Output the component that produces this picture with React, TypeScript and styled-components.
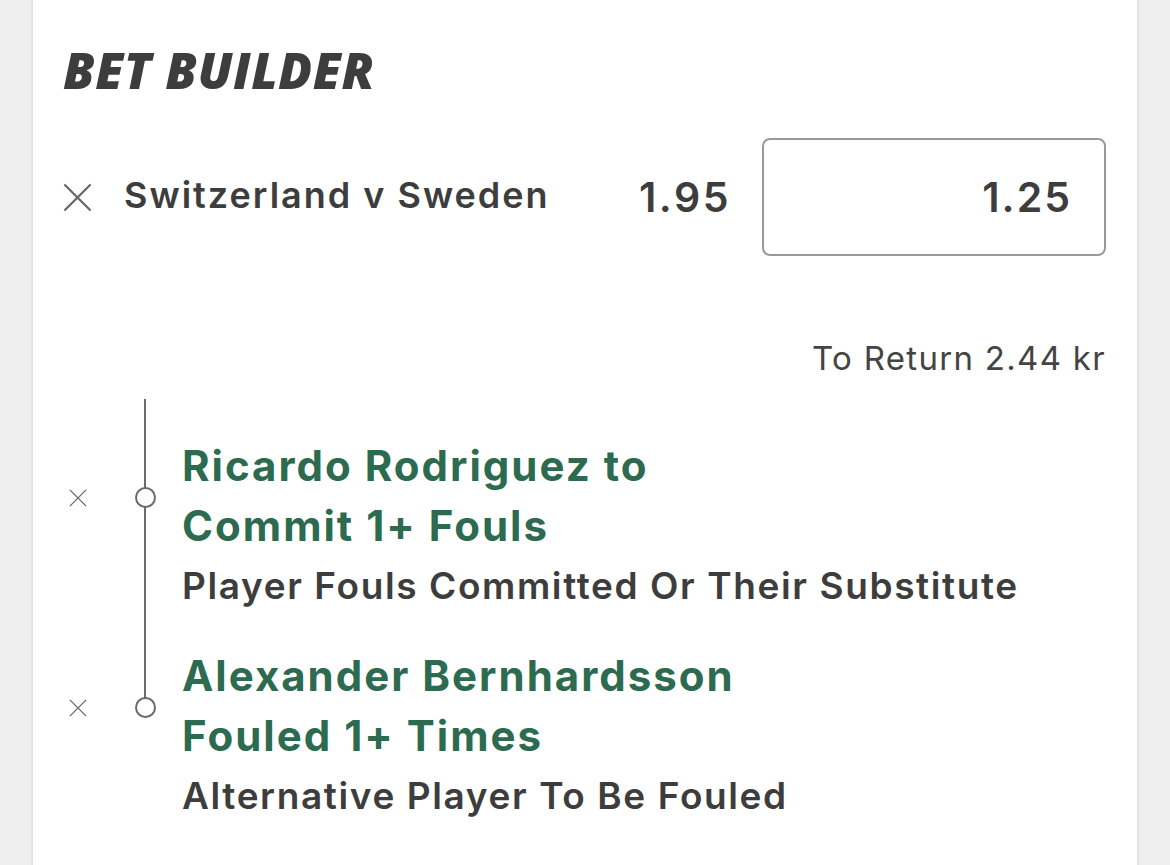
import React from 'react'
import styled, { createGlobalStyle } from 'styled-components';

interface Leg {
    id: number;
    title: string[];
    market: string;
}

const legs: Leg[] = [
    { id: 1, title: ['Ricardo Rodriguez to', 'Commit 1+ Fouls'], market: 'Player Fouls Committed Or Their Substitute' },
    { id: 2, title: ['Alexander Bernhardsson', 'Fouled 1+ Times'], market: 'Alternative Player To Be Fouled' },
];

const CloseIcon: React.FC<{ size: number; stroke: number }> = ({ size, stroke }) => (
    <svg width={size} height={size} viewBox="0 0 20 20">
        <path d="M1 1 L19 19 M19 1 L1 19" stroke="#666" strokeWidth={stroke} fill="none" />
    </svg>
);

export default function App() {
    return (
        <>
            <GlobalStyle />
            <Page>
                <Card>
                    <Title>BET BUILDER</Title>
                    <SelectionRow>
                        <RemoveButton type="button">
                            <CloseIcon size={29} stroke={1.5} />
                        </RemoveButton>
                        <MatchName>Switzerland v Sweden</MatchName>
                        <Odds>1.95</Odds>
                        <StakeBox>1.25</StakeBox>
                    </SelectionRow>
                    <ReturnText>To Return 2.44 kr</ReturnText>
                    <LegList>
                        <Rail />
                        {legs.map((leg) => (
                            <LegRow key={leg.id}>
                                <LegControls>
                                    <LegRemove type="button">
                                        <CloseIcon size={18} stroke={1.4} />
                                    </LegRemove>
                                    <Dot />
                                </LegControls>
                                <LegTitle>
                                    {leg.title.map((line) => (
                                        <div key={line}>{line}</div>
                                    ))}
                                </LegTitle>
                                <LegMarket>{leg.market}</LegMarket>
                            </LegRow>
                        ))}
                    </LegList>
                </Card>
            </Page>
        </>
    );
}

const GlobalStyle = createGlobalStyle`
    html, body {
        margin: 0;
        padding: 0;
        background: #efefef;
    }
    body {
        font-family: Inter, "Noto Sans", sans-serif;
        color: #3d3d3d;
    }
`;

const Page = styled.div`
    display: flex;
    height: 865px;
    overflow: hidden;
    padding-left: 31px;
    box-sizing: border-box;
`;

const Card = styled.div`
    width: 1108px;
    box-sizing: border-box;
    background: #fff;
    border-left: 2px solid #e4e4e4;
    border-right: 2px solid #e4e4e4;
    padding: 41px 31px 0 30px;
    display: flex;
    flex-direction: column;
`;

const Title = styled.h1`
    margin: 0;
    font-family: "Open Sans", Inter, sans-serif;
    font-style: italic;
    font-weight: 800;
    font-size: 50px;
    line-height: 58px;
    letter-spacing: 0.5px;
    color: #3d3d3d;
`;

const SelectionRow = styled.div`
    display: flex;
    align-items: center;
    margin-top: 39px;
`;

const RemoveButton = styled.button`
    border: none;
    background: none;
    padding: 0;
    margin: 0 32px 0 0;
    display: flex;
    cursor: pointer;
`;

const MatchName = styled.span`
    flex: 1;
    font-size: 36px;
    font-weight: 600;
    letter-spacing: 2px;
    color: #3d3d3d;
    margin-top: -4px;
`;

const Odds = styled.span`
    font-size: 41px;
    font-weight: 600;
    letter-spacing: 2.5px;
    color: #3d3d3d;
    margin-right: 31px;
`;

const StakeBox = styled.div`
    width: 344px;
    height: 118px;
    box-sizing: border-box;
    border: 2px solid #999;
    border-radius: 8px;
    display: flex;
    align-items: center;
    justify-content: flex-end;
    padding-right: 32px;
    font-size: 41px;
    font-weight: 600;
    letter-spacing: 2px;
    color: #3d3d3d;
`;

const ReturnText = styled.div`
    align-self: flex-end;
    margin-top: 82px;
    font-size: 33px;
    font-weight: 400;
    letter-spacing: 1.3px;
    color: #444;
`;

const LegList = styled.div`
    position: relative;
    margin-top: 21px;
    padding-top: 37px;
    display: flex;
    flex-direction: column;
    gap: 30px;
`;

const Rail = styled.div`
    position: absolute;
    left: 81px;
    top: 0;
    height: 305px;
    width: 2px;
    background: #6a6a6a;
`;

const LegRow = styled.div`
    display: grid;
    grid-template-columns: 119px 1fr;
    grid-template-rows: auto auto;
`;

const LegControls = styled.div`
    grid-row: 1;
    grid-column: 1;
    display: flex;
    align-items: center;
    padding: 3px 0 0 6px;
    gap: 48px;
`;

const LegRemove = styled.button`
    border: none;
    background: none;
    padding: 0;
    display: flex;
    cursor: pointer;
`;

const Dot = styled.div`
    width: 21px;
    height: 21px;
    box-sizing: border-box;
    border-radius: 50%;
    border: 2px solid #6a6a6a;
    background: #fff;
    position: relative;
    z-index: 1;
`;

const LegTitle = styled.div`
    grid-row: 1;
    grid-column: 2;
    font-size: 42px;
    font-weight: 700;
    line-height: 60px;
    letter-spacing: 2px;
    color: #2d6b50;
`;

const LegMarket = styled.div`
    grid-row: 2;
    grid-column: 2;
    font-size: 37px;
    font-weight: 600;
    line-height: 60px;
    letter-spacing: 1.6px;
    color: #3d3d3d;
`;
